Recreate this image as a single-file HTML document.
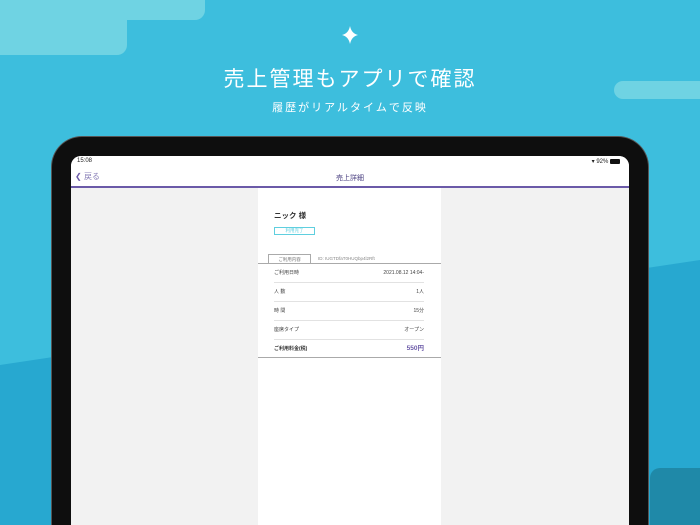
<!DOCTYPE html>
<html><head><meta charset="utf-8"><style>
*{margin:0;padding:0;box-sizing:border-box}
html,body{width:700px;height:525px;overflow:hidden}
body{position:relative;background:#3dbedd;font-family:"Liberation Sans","Noto Sans CJK JP",sans-serif}
.a{position:absolute}
.c{background:#6fd3e3}
.r{height:19px;line-height:18px;border-bottom:1px solid #e2e2e2;display:flex;justify-content:space-between}
</style></head><body>
<svg class="a" style="left:0;top:0" width="700" height="525">
<polygon points="0,365 700,260 700,525 0,525" fill="#27a8d0"/>
<rect x="650" y="468" width="60" height="70" rx="10" fill="#1f89a8"/>
<path d="M350 26 Q351.5 33.5 358 35 Q351.5 36.5 350 44 Q348.5 36.5 342 35 Q348.5 33.5 350 26Z" fill="#fff"/>
</svg>
<div class="a c" style="left:-20px;top:-10px;width:225px;height:30px;border-radius:10px"></div>
<div class="a c" style="left:-20px;top:10px;width:147px;height:45px;border-radius:10px"></div>
<div class="a c" style="left:614px;top:81px;width:100px;height:18px;border-radius:9px"></div>
<div class="a" style="left:0;width:700px;top:63px;text-align:center;color:#fff;font-size:21px;letter-spacing:2px;font-family:'Noto Sans CJK JP',sans-serif">売上管理もアプリで確認</div>
<div class="a" style="left:0;width:700px;top:99px;text-align:center;color:#fff;font-size:11px;letter-spacing:2px;font-family:'Noto Sans CJK JP',sans-serif">履歴がリアルタイムで反映</div>
<div class="a" style="left:52px;top:137px;width:596px;height:400px;background:#0e0e0e;border-radius:30px 30px 0 0;box-shadow:0 0 0 1px #555"></div>
<div class="a" style="left:71px;top:156px;width:558px;height:369px;background:#f2f2f2;border-radius:10px 10px 0 0;overflow:hidden">
 <div class="a" style="left:0;top:0;width:558px;height:30px;background:#fff"></div>
 <div class="a" style="left:6px;top:2px;font-size:6px;color:#222">15:08</div>
 <div class="a" style="right:9px;top:2px;font-size:6px;color:#222">▾ 92% <span style="display:inline-block;width:10px;height:5px;background:#111;border-radius:1px;vertical-align:middle"></span></div>
 <div class="a" style="left:4px;top:15px;font-size:8px;color:#6b5aa8">❮ <span style="color:#8a80b8">戻る</span></div>
 <div class="a" style="left:0;width:558px;top:17px;text-align:center;font-size:7px;color:#4a3f80">売上詳細</div>
 <div class="a" style="left:0;top:30px;width:558px;height:2px;background:#6b5aa8"></div>
 <div class="a" style="left:187px;top:32px;width:183px;height:360px;background:#fff">
  <div class="a" style="left:16px;top:22px;font-size:7.5px;font-weight:bold;color:#333">ニック 様</div>
  <div class="a" style="left:16px;top:39px;width:41px;height:8px;border:1px solid #5fcfdf;font-size:4.5px;color:#5fcfdf;text-align:center;line-height:6px">利用完了</div>
  <div class="a" style="left:10px;top:66px;width:43px;height:10px;border:1px solid #aaa;border-bottom:none;font-size:4.5px;color:#777;text-align:center;line-height:9px">ご利用内容</div>
  <div class="a" style="left:60px;top:68px;font-size:4.5px;color:#888">ID: IUGTDfaT0HUQbp4l2Rft</div>
  <div class="a" style="left:0;top:75px;width:183px;height:1px;background:#aaa"></div>
  <div class="a" style="left:16px;top:76px;width:150px;font-size:5px;color:#444">
   <div class="r">ご利用日時<span>2021.08.12 14:04-</span></div>
   <div class="r">人 数<span>1人</span></div>
   <div class="r">時 間<span>15分</span></div>
   <div class="r">座席タイプ<span>オープン</span></div>
   <div class="r" style="border:none;font-weight:bold;color:#333">ご利用料金(税)<span style="color:#6b5aa8;font-size:6.5px">550円</span></div>
  </div>
  <div class="a" style="left:0;top:169px;width:183px;height:1px;background:#aaa"></div>
 </div>
</div>
</body></html>
